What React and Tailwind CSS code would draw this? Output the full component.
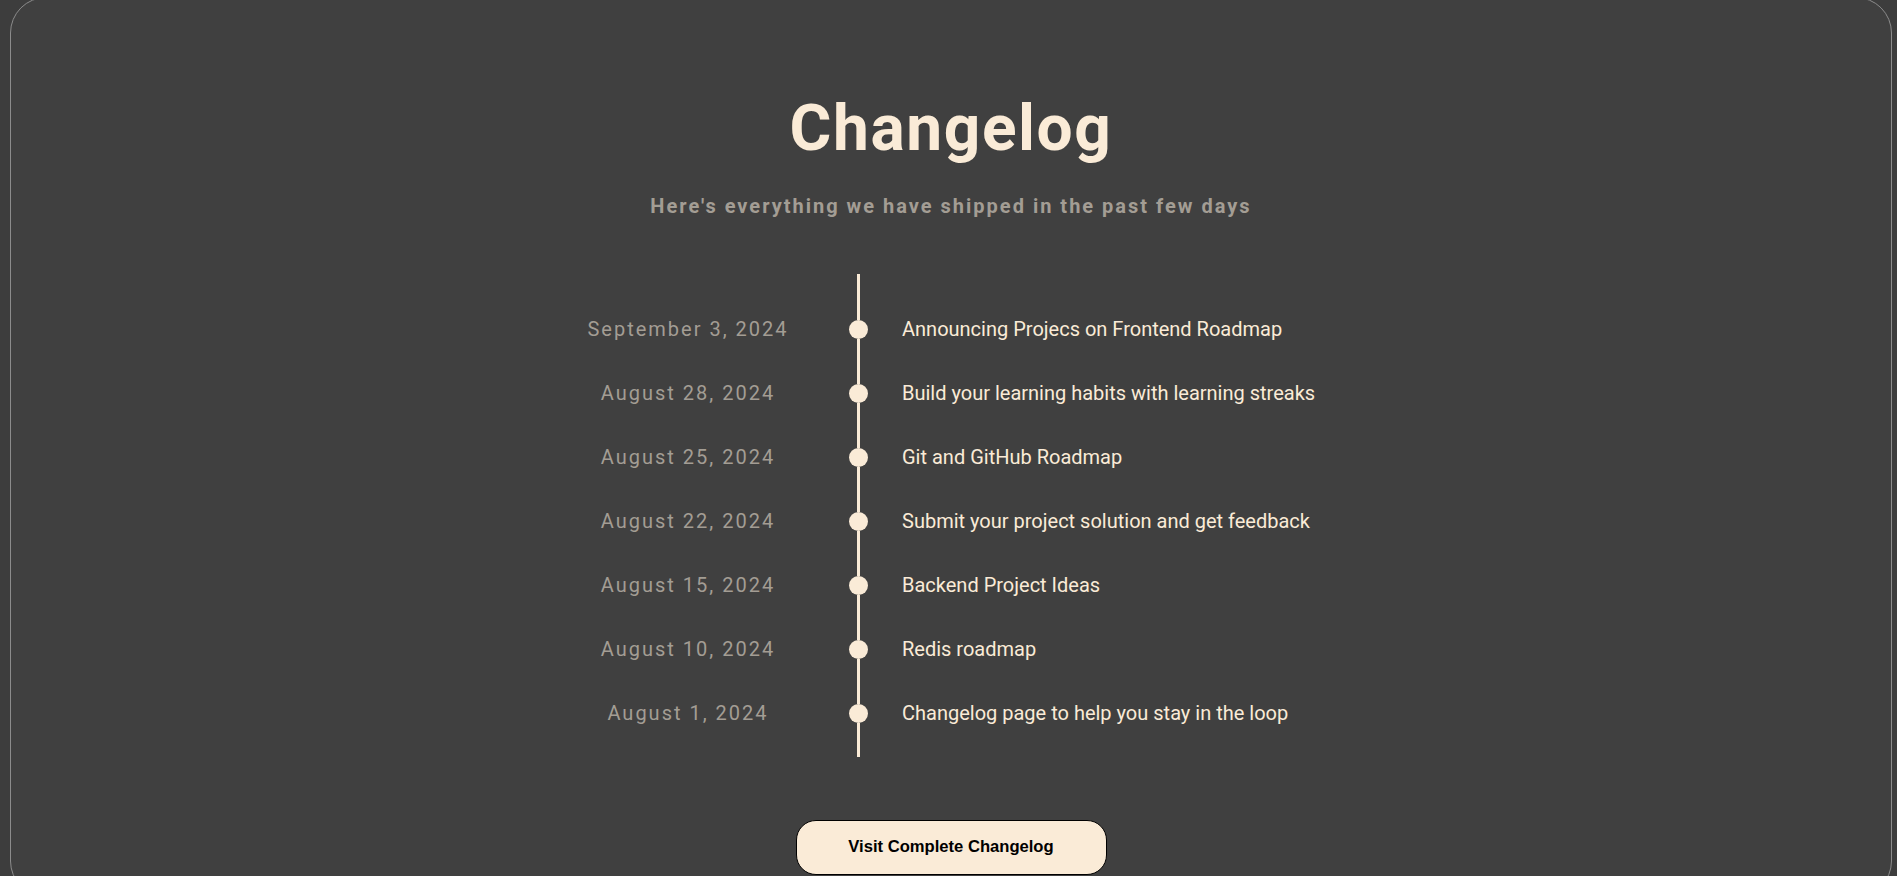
const entries = [
  { date: 'September 3, 2024', title: 'Announcing Projecs on Frontend Roadmap' },
  { date: 'August 28, 2024', title: 'Build your learning habits with learning streaks' },
  { date: 'August 25, 2024', title: 'Git and GitHub Roadmap' },
  { date: 'August 22, 2024', title: 'Submit your project solution and get feedback' },
  { date: 'August 15, 2024', title: 'Backend Project Ideas' },
  { date: 'August 10, 2024', title: 'Redis roadmap' },
  { date: 'August 1, 2024', title: 'Changelog page to help you stay in the loop' },
]

function Spacer({ height }) {
  return (
    <div className={`flex ${height}`}>
      <div className="w-[320px]" />
      <div className="w-[21px] flex justify-center">
        <div className="w-[3px] h-full bg-[#faebd7]" />
      </div>
    </div>
  )
}

export default function App() {
  return (
    <div className="min-h-screen bg-[#3d3d3d] overflow-hidden font-['Roboto',sans-serif]">
      <div className="-mt-[3px] ml-[10px] mr-[5px] min-h-[900px] bg-[#404040] border border-[#8c8c8c] rounded-[36px] pt-[99px] flex flex-col items-center">
        <h1 className="text-[64px] leading-none font-bold tracking-wide text-[#faebd7]">Changelog</h1>
        <p className="mt-[31px] text-[20px] leading-[28px] font-bold tracking-widest text-[#a39d94]">
          Here's everything we have shipped in the past few days
        </p>

        <div className="mt-[54px] w-[846px]">
          <Spacer height="h-[23px]" />
          {entries.map((item) => (
            <div key={item.date} className="flex h-[64px]">
              <div className="w-[320px] flex items-center justify-center text-[20px] tracking-widest text-[#a39d94]">
                {item.date}
              </div>
              <div className="w-[21px] flex flex-col items-center">
                <div className="flex-1 w-[3px] bg-[#faebd7]" />
                <div className="w-[19px] h-[19px] rounded-full bg-[#faebd7]" />
                <div className="flex-1 w-[3px] bg-[#faebd7]" />
              </div>
              <div className="flex-1 flex items-center pl-[33px] text-[20px] text-[#faebd7]">
                {item.title}
              </div>
            </div>
          ))}
          <Spacer height="h-[12px]" />
        </div>

        <button className="mt-[63px] w-[311px] h-[55px] rounded-[20px] border border-black bg-[#faebd7] text-black text-[16.6px] font-bold font-['Liberation_Sans',Arial,sans-serif]">
          Visit Complete Changelog
        </button>
      </div>
    </div>
  )
}
